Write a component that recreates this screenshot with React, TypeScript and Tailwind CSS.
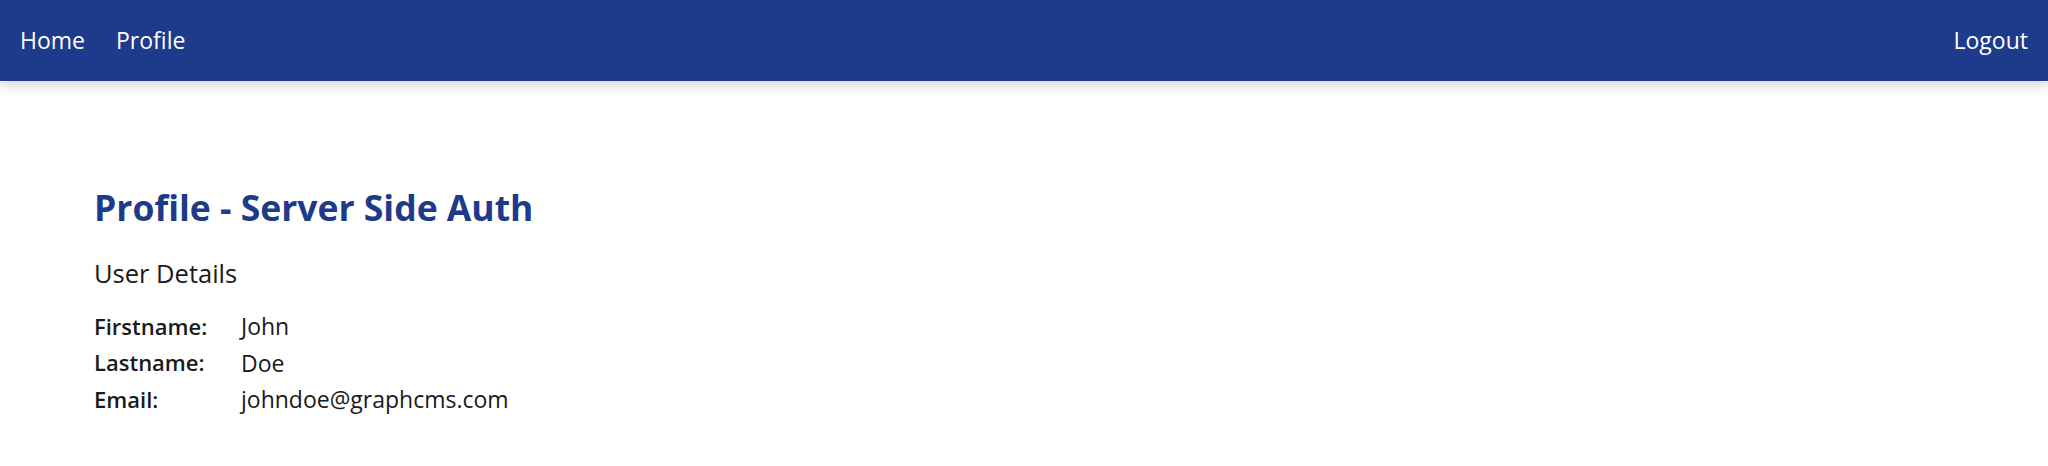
import React from "react";

export default function App() {
  const rows = [
    ["Firstname:", "John"],
    ["Lastname:", "Doe"],
    ["Email:", "johndoe@graphcms.com"],
  ];
  return (
    <div className="min-h-[466px] bg-white font-['Open_Sans',sans-serif] text-[#1a1a1a]">
      <nav className="flex h-[81px] items-center justify-between bg-[#1e3a8a] px-[20px] text-[23px] text-white shadow-[0_4px_12px_rgba(0,0,0,0.18)]">
        <div className="flex items-center gap-[31px]">
          <a>Home</a>
          <a>Profile</a>
        </div>
        <a>Logout</a>
      </nav>
      <main className="px-[94px] pt-[102px]">
        <h1 className="text-[35.5px] font-bold leading-[48px] text-[#1e3a8a]">Profile - Server Side Auth</h1>
        <h2 className="mt-[26px] text-[25.5px] leading-[32px]">User Details</h2>
        <div className="mt-[19px] flex flex-col text-[22px]">
          {rows.map(([k, v]) => (
            <div key={k} className="flex h-[36.5px] items-center">
              <span className="w-[147px] font-semibold">{k}</span>
              <span className="text-[23px]">{v}</span>
            </div>
          ))}
        </div>
      </main>
    </div>
  );
}
